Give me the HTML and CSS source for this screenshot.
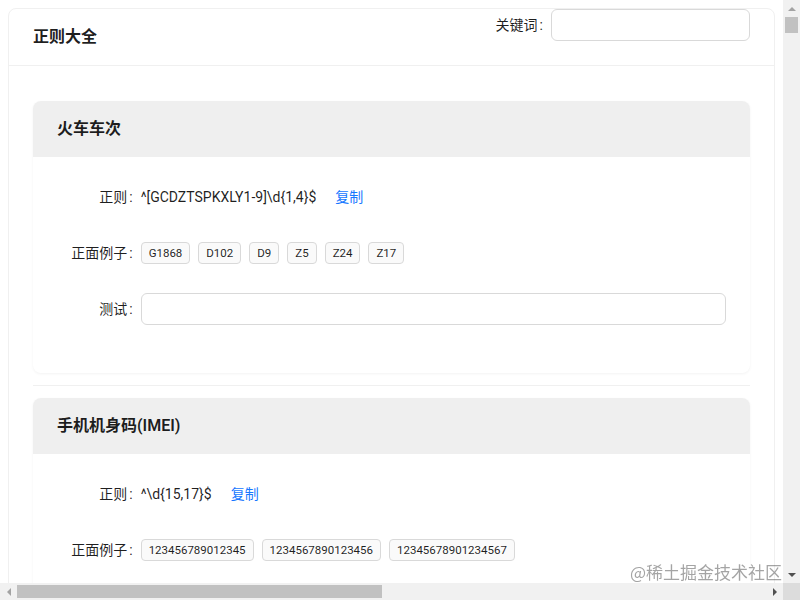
FILE: index.html
```html
<!DOCTYPE html>
<html lang="zh-CN">
<head>
<meta charset="utf-8">
<title>正则大全</title>
<link rel="stylesheet" href="styles.css">
</head>
<body>
<div class="frame">
  <div class="viewport">
    <div class="page">
      <div class="card">
        <div class="card-head">
          <div class="card-title">正则大全</div>
          <div class="card-extra">
            <label class="form-label" for="kw">关键词</label>
            <input id="kw" class="input input-kw" type="text">
          </div>
        </div>
        <div class="card-body">
          <ul class="rule-list">
            <li class="rule-item">
              <div class="rule-card">
                <div class="rule-head">火车车次</div>
                <div class="rule-body">
                  <div class="form-row">
                    <div class="form-label">正则</div>
                    <div class="form-control"><span class="regex">^[GCDZTSPKXLY1-9]\d{1,4}$</span><a class="copy" href="#">复制</a></div>
                  </div>
                  <div class="form-row">
                    <div class="form-label">正面例子</div>
                    <div class="form-control">
                      <div class="tags"><span class="tag">G1868</span><span class="tag">D102</span><span class="tag">D9</span><span class="tag">Z5</span><span class="tag">Z24</span><span class="tag">Z17</span></div>
                    </div>
                  </div>
                  <div class="form-row">
                    <div class="form-label">测试</div>
                    <div class="form-control"><input class="input input-test" type="text"></div>
                  </div>
                </div>
              </div>
            </li>
            <li class="rule-item">
              <div class="rule-card">
                <div class="rule-head">手机机身码(IMEI)</div>
                <div class="rule-body">
                  <div class="form-row">
                    <div class="form-label">正则</div>
                    <div class="form-control"><span class="regex">^\d{15,17}$</span><a class="copy" href="#">复制</a></div>
                  </div>
                  <div class="form-row">
                    <div class="form-label">正面例子</div>
                    <div class="form-control">
                      <div class="tags"><span class="tag">123456789012345</span><span class="tag">1234567890123456</span><span class="tag">12345678901234567</span></div>
                    </div>
                  </div>
                  <div class="form-row">
                    <div class="form-label">测试</div>
                    <div class="form-control"><input class="input input-test" type="text"></div>
                  </div>
                </div>
              </div>
            </li>
          </ul>
        </div>
      </div>
    </div>
  </div>
  <div class="vbar">
    <span class="sb-btn sb-up"></span>
    <div class="sb-track"><div class="sb-thumb"></div></div>
    <span class="sb-btn sb-down"></span>
  </div>
  <div class="hbar">
    <span class="sb-btn sb-left"></span>
    <div class="sb-track"><div class="sb-thumb"></div></div>
    <span class="sb-btn sb-right"></span>
  </div>
  <div class="sb-corner"></div>
</div>
<div class="watermark">@稀土掘金技术社区</div>
</body>
</html>
```

FILE: styles.css
```css
* { box-sizing: border-box; }

html, body { margin: 0; height: 100%; background: #fff; }

body {
  font-family: Roboto, "Noto Sans CJK SC", sans-serif;
  font-size: 14px;
  line-height: 1.5715;
  color: rgba(0, 0, 0, 0.88);
}

/* window frame: page area + scrollbars */
.frame {
  display: grid;
  grid-template-columns: minmax(0, 1fr) 17px;
  grid-template-rows: minmax(0, 1fr) 17px;
  height: 100vh;
}

.viewport { overflow: hidden; }

.page { padding: 8px; }

.vbar, .hbar { display: flex; background: #f1f1f1; }
.vbar { flex-direction: column; }

.sb-btn {
  flex: 0 0 17px;
  display: flex;
  align-items: center;
  justify-content: center;
}

.sb-btn::before { content: ""; width: 0; height: 0; }
.sb-up::before { border-left: 4px solid transparent; border-right: 4px solid transparent; border-bottom: 4px solid #a3a3a3; }
.sb-down::before { border-left: 4px solid transparent; border-right: 4px solid transparent; border-top: 4px solid #505050; }
.sb-left::before { border-top: 4px solid transparent; border-bottom: 4px solid transparent; border-right: 4px solid #a3a3a3; }
.sb-right::before { border-top: 4px solid transparent; border-bottom: 4px solid transparent; border-left: 4px solid #505050; }

.sb-track { flex: 1 1 auto; display: flex; }
.vbar .sb-track { flex-direction: column; padding: 0 2px; }
.hbar .sb-track { padding: 2px 0; }

.sb-thumb { background: #c1c1c1; }
.vbar .sb-thumb { height: 16px; }
.hbar .sb-thumb { width: 365px; }

.sb-corner { background: #dcdcdc; }

/* card */
.card {
  border: 1px solid #f0f0f0;
  border-radius: 8px;
  background: #fff;
}

.card-head {
  display: flex;
  align-items: center;
  justify-content: space-between;
  min-height: 56px;
  padding: 0 24px;
  border-bottom: 1px solid #f0f0f0;
}

.card-title {
  font-size: 16px;
  font-weight: 600;
}

.card-extra {
  display: flex;
  align-items: center;
  margin-bottom: 24px;
}

.form-label {
  white-space: nowrap;
  text-align: right;
}

.form-label::after {
  content: ":";
  margin: 0 8px 0 2px;
}

.input {
  height: 32px;
  padding: 4px 11px;
  border: 1px solid #d9d9d9;
  border-radius: 6px;
  background: #fff;
  font: inherit;
  color: inherit;
  outline: none;
}

.input-kw { width: 199px; }

.input-test { width: 100%; }

.card-body { padding: 23px 24px 24px; }

.rule-list {
  list-style: none;
  margin: 0;
  padding: 0;
}

.rule-item {
  padding: 12px 0;
  border-bottom: 1px solid #f0f0f0;
}

.rule-card {
  border-radius: 8px;
  background: #fff;
  box-shadow: 0 1px 3px rgba(0, 0, 0, 0.05);
}

.rule-head {
  display: flex;
  align-items: center;
  height: 56px;
  padding: 0 24px;
  background: #efefef;
  border-radius: 8px 8px 0 0;
  font-size: 16px;
  font-weight: 600;
}

.rule-body { padding: 24px; }

.form-row {
  display: flex;
  align-items: center;
  min-height: 32px;
  margin-bottom: 24px;
}

.form-row > .form-label { flex: 0 0 12.5%; }

.form-control {
  flex: 1 1 auto;
  display: flex;
  align-items: center;
  min-width: 0;
}

.regex { white-space: nowrap; }

.copy {
  margin-left: 19px;
  color: #1677ff;
  text-decoration: none;
  white-space: nowrap;
}

.tags {
  display: flex;
  flex-wrap: wrap;
  gap: 8px;
}

.tag {
  display: inline-block;
  height: 22px;
  line-height: 20px;
  padding: 0 7px;
  font-size: 11.5px;
  border: 1px solid #d9d9d9;
  border-radius: 4px;
  background: #fafafa;
  white-space: nowrap;
}

.watermark {
  position: fixed;
  right: 18px;
  bottom: 17px;
  font-family: "Noto Sans CJK SC", sans-serif;
  font-size: 17px;
  line-height: 22px;
  color: rgba(90, 90, 90, 0.55);
  pointer-events: none;
}
```
